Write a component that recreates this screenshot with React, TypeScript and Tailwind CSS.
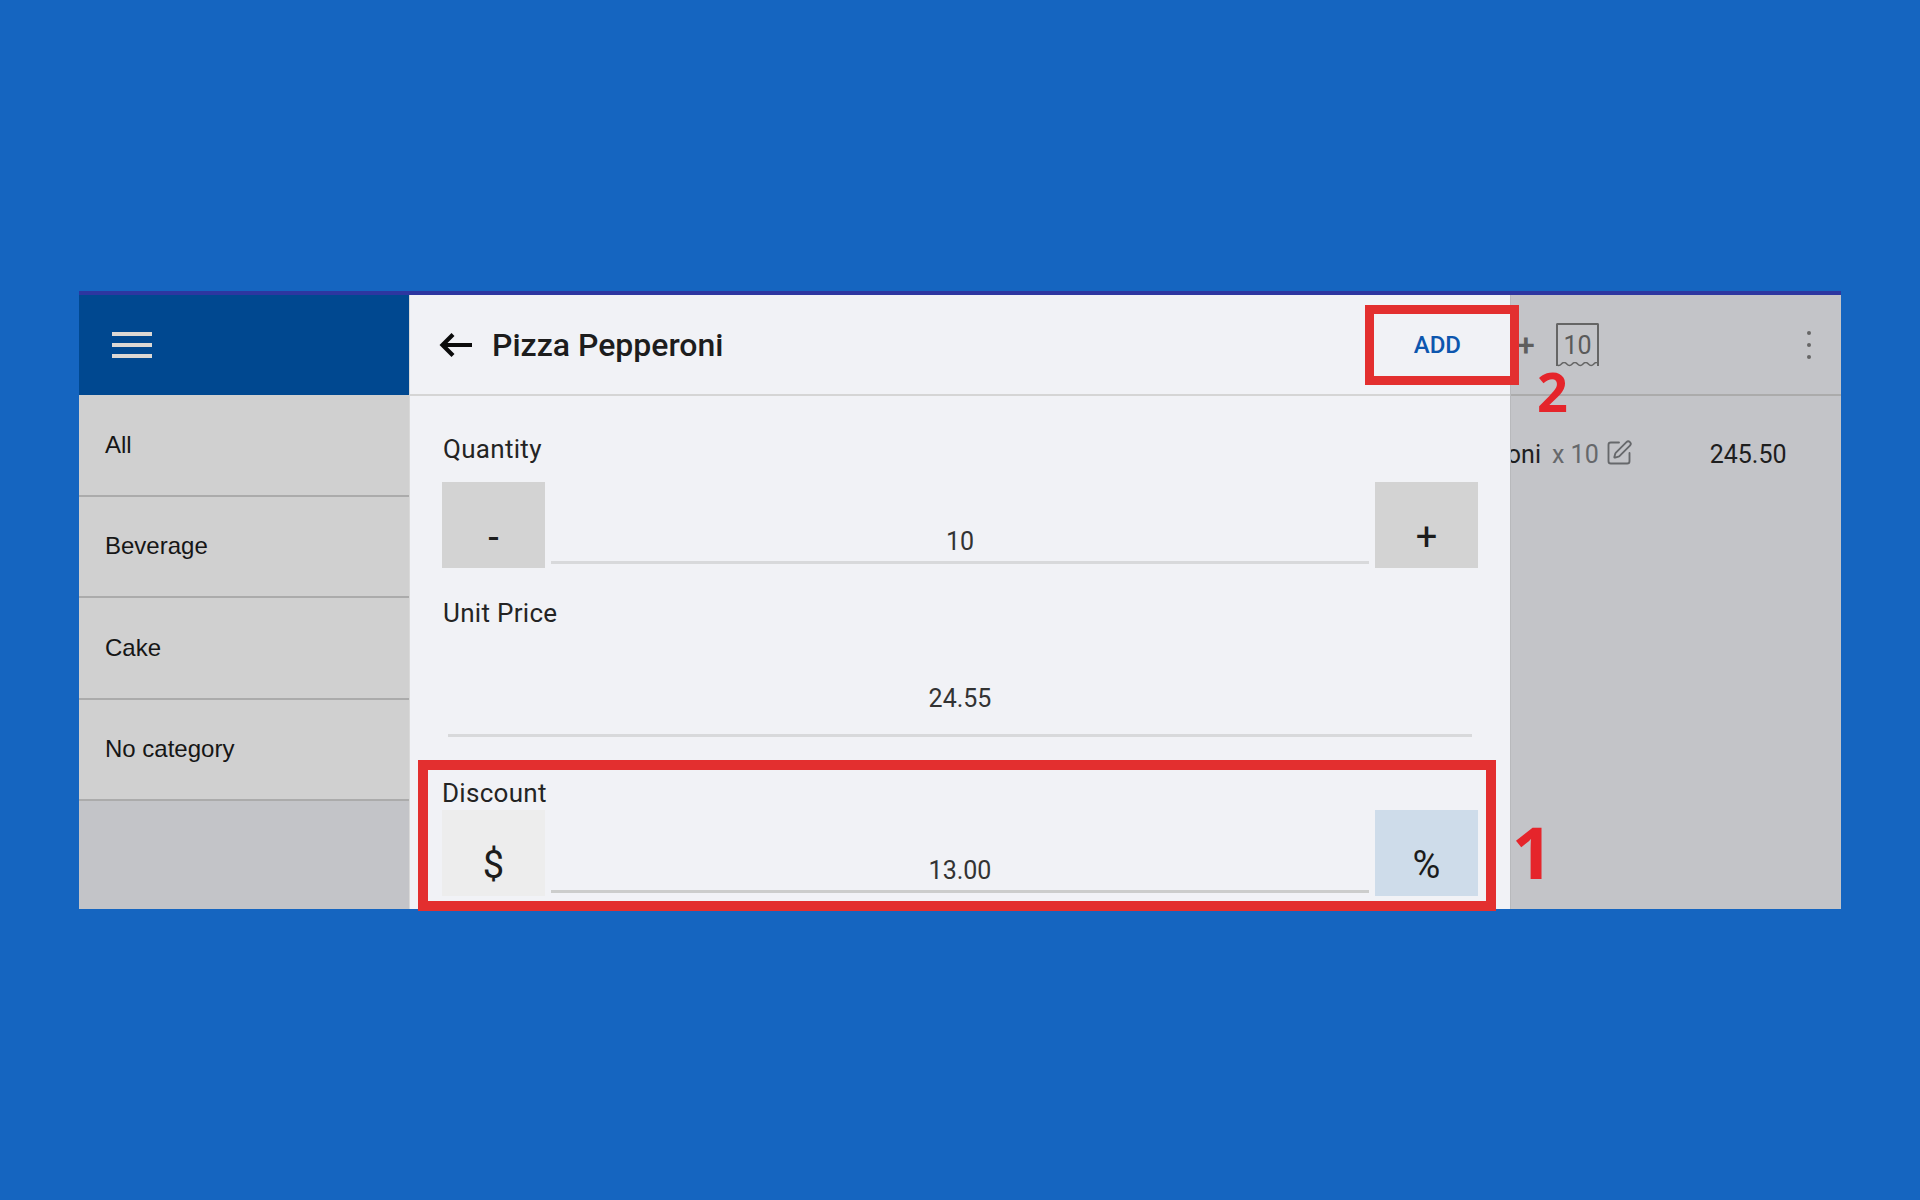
import { SquarePen } from "lucide-react";

const CATEGORIES = ["All", "Beverage", "Cake", "No category"];

function QtyButton({ label, className = "bg-[#d3d3d3]" }: { label: string; className?: string }) {
  return (
    <div className={`w-[103px] h-[86px] shrink-0 flex items-end justify-center pb-[3px] text-[38px] leading-[56px] text-[#1c1c1c] ${className}`}>
      {label}
    </div>
  );
}

function FieldValue({ value, className = "bg-[#d8d9db] mb-[1px]" }: { value: string; className?: string }) {
  return (
    <div className="flex-1 h-[86px] mx-[6px] flex flex-col justify-end pb-[3px]">
      <div className="text-center text-[25px] leading-[30px] text-[#333333]">{value}</div>
      <div className={`h-[3px] mt-[4px] ${className}`} />
    </div>
  );
}

export default function App() {
  return (
    <div className="relative min-h-screen bg-[#1565c0] pt-[291px] pl-[79px] font-['Roboto',sans-serif]">
      <div className="w-[1762px] h-[618px] flex flex-col border-t-4 border-[#2d36a0] overflow-hidden">
        <div className="flex flex-1 min-h-0">
          {/* left category list */}
          <div className="w-[330px] shrink-0 flex flex-col bg-[#c3c4c8]">
            <div className="h-[100px] shrink-0 bg-[#004890] flex items-center pl-[33px]">
              <div className="w-[40px] flex flex-col gap-[7px]">
                <div className="h-[4px] bg-[#dcd8d4]" />
                <div className="h-[4px] bg-[#dcd8d4]" />
                <div className="h-[4px] bg-[#dcd8d4]" />
              </div>
            </div>
            {CATEGORIES.map((c) => (
              <div key={c} className="h-[101.5px] shrink-0 bg-[#d0d0d0] border-b-2 border-[#ababab] flex items-center pl-[26px] text-[24px] text-[#161616] font-['Liberation_Sans',sans-serif]">
                {c}
              </div>
            ))}
          </div>

          {/* product dialog */}
          <div className="w-[1102px] shrink-0 flex flex-col bg-[#f1f2f6] border-l border-[#d9d9d9] border-r border-r-[#b8b9bc]">
            <div className="h-[101px] shrink-0 border-b-2 border-[#d5d5d5] flex items-center pl-[29px] pr-[49px]">
              <svg width="34" height="26" viewBox="0 0 34 26" fill="none" stroke="#0c0c0c" strokeWidth="4.2">
                <path d="M33 13H4M14 2.5 3.500 13l10.500 10.500" />
              </svg>
              <div className="ml-[19px] mt-[1px] text-[32px] font-medium text-[#1d1d1d]">Pizza Pepperoni</div>
              <div className="ml-auto text-[24px] font-medium text-[#0d56ae]">ADD</div>
            </div>

            <div className="flex-1 px-[32px] overflow-hidden">
              <div className="pt-[35px] pl-[1px] text-[26px] tracking-[0.3px] leading-[36px] text-[#242424]">Quantity</div>
              <div className="flex mt-[15px]">
                <QtyButton label="-" />
                <FieldValue value="10" />
                <QtyButton label="+" />
              </div>

              <div className="mt-[27px] pl-[1px] text-[26px] tracking-[0.3px] leading-[36px] text-[#242424]">Unit Price</div>
              <div className="mx-[6px] mt-[53px] text-center text-[25px] leading-[30px] text-[#333333]">24.55</div>
              <div className="mx-[6px] mt-[20px] h-[3px] bg-[#d8d9db]" />

              <div className="mt-[38px] text-[26px] tracking-[0.3px] leading-[36px] text-[#242424]">Discount</div>
              <div className="flex -mt-[1px]">
                <QtyButton label="$" className="bg-[#ededed]" />
                <FieldValue value="13.00" className="bg-[#cccdcc]" />
                <QtyButton label="%" className="bg-[#cedcea]" />
              </div>
            </div>
          </div>

          {/* cart behind the dialog */}
          <div className="flex-1 flex flex-col bg-[#c3c4c8] overflow-hidden">
            <div className="h-[101px] shrink-0 border-b-2 border-[#ababab] flex items-center pl-[6px] pr-[30px]">
              <span className="text-[32px] font-medium text-[#5e5e5e] w-[39px] leading-none">+</span>
              <div className="relative w-[43px] h-[43px] border-2 border-b-0 border-[#656565] rounded-t-[2px] flex items-center justify-center text-[25px] text-[#5a5a5a]">
                10
                <svg className="absolute left-[-2px] bottom-[-1px]" width="43" height="5" viewBox="0 0 43 5" fill="none" stroke="#656565" strokeWidth="1.5">
                  <path d="M0 2q2.7 3 5.4 0t5.4 0 5.4 0 5.4 0 5.4 0 5.4 0 5.4 0 5.4 0" />
                </svg>
              </div>
              <div className="ml-auto flex flex-col gap-[8px]">
                <div className="w-[4px] h-[4px] rounded-full bg-[#666666]" />
                <div className="w-[4px] h-[4px] rounded-full bg-[#666666]" />
                <div className="w-[4px] h-[4px] rounded-full bg-[#666666]" />
              </div>
            </div>
            <div className="flex items-center pt-[44px] text-[25px] leading-[30px] text-[#1e1e1e]">
              <div className="w-[30px] overflow-hidden flex justify-end whitespace-nowrap">Pizza Pepperoni</div>
              <span className="ml-[11px] text-[#66686b]">x 10</span>
              <SquarePen size={28} strokeWidth={1.6} className="ml-[6px] -mt-[4px] text-[#66686b]" />
              <span className="ml-[77px]">245.50</span>
            </div>
          </div>
        </div>
      </div>

      {/* annotations drawn over the screenshot */}
      <div className="absolute left-[418px] top-[760px] w-[1078px] h-[151px] border-[10px] border-[#e32f2f]" />
      <div className="absolute left-[1365px] top-[305px] w-[154px] h-[80px] border-[9px] border-[#e32f2f]" />
      <div className="absolute left-[1537px] top-[361px] text-[54px] leading-[60px] font-bold text-[#e5252b] font-['Open_Sans',sans-serif]">2</div>
      <div className="absolute left-[1503px] top-[807px] w-[50px] text-right text-[72px] leading-[88px] font-bold text-[#e5252b] font-['Open_Sans',sans-serif]">1</div>
    </div>
  );
}
